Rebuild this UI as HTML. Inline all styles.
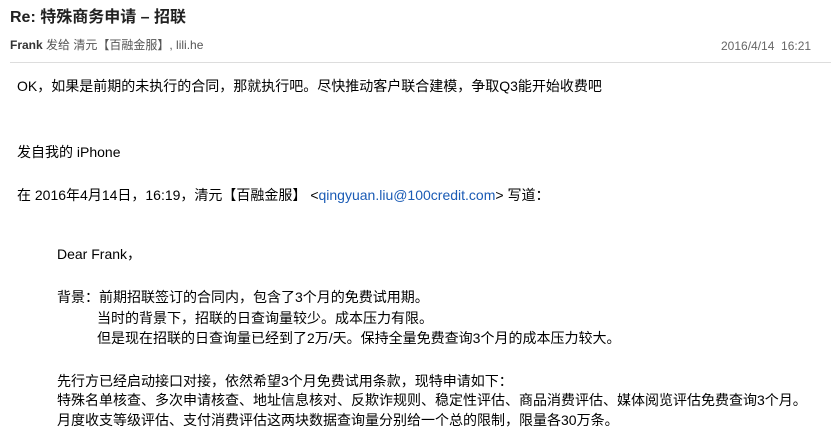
<!DOCTYPE html>
<html><head><meta charset="utf-8"><style>
body{margin:0;width:831px;height:436px;overflow:hidden;background:#fff;font-family:"Liberation Sans","Noto Sans CJK SC",sans-serif;color:#000;position:relative}
.l{position:absolute;white-space:nowrap;font-size:14px;line-height:20px}
a{color:#1a5bb5;text-decoration:none}
</style></head><body>
<div class="l" style="left:10px;top:8px;font-size:16px;font-weight:bold;color:#222">Re: 特殊商务申请 – 招联</div>
<div class="l" style="left:10px;top:35px;font-size:12px;color:#555"><b style="color:#333">Frank</b> 发给 清元【百融金服】, lili.he</div>
<div class="l" style="left:721px;top:36px;font-size:12px;color:#666">2016/4/14&nbsp;&nbsp;16:21</div>
<div style="position:absolute;left:10px;right:0;top:62px;height:1px;background:#ddd"></div>
<div class="l" style="left:17px;top:76px">OK，如果是前期的未执行的合同，那就执行吧。尽快推动客户联合建模，争取Q3能开始收费吧</div>
<div class="l" style="left:17px;top:142px">发自我的 iPhone</div>
<div class="l" style="left:17px;top:185px">在 2016年4月14日，16:19，清元【百融金服】 &lt;<a>qingyuan.liu@100credit.com</a>&gt; 写道：</div>
<div class="l" style="left:57px;top:244px">Dear Frank，</div>
<div class="l" style="left:57px;top:287px">背景：前期招联签订的合同内，包含了3个月的免费试用期。</div>
<div class="l" style="left:97px;top:308px">当时的背景下，招联的日查询量较少。成本压力有限。</div>
<div class="l" style="left:97px;top:328px">但是现在招联的日查询量已经到了2万/天。保持全量免费查询3个月的成本压力较大。</div>
<div class="l" style="left:57px;top:371px">先行方已经启动接口对接，依然希望3个月免费试用条款，现特申请如下：</div>
<div class="l" style="left:57px;top:390px">特殊名单核查、多次申请核查、地址信息核对、反欺诈规则、稳定性评估、商品消费评估、媒体阅览评估免费查询3个月。</div>
<div class="l" style="left:57px;top:410px">月度收支等级评估、支付消费评估这两块数据查询量分别给一个总的限制，限量各30万条。</div>
</body></html>
